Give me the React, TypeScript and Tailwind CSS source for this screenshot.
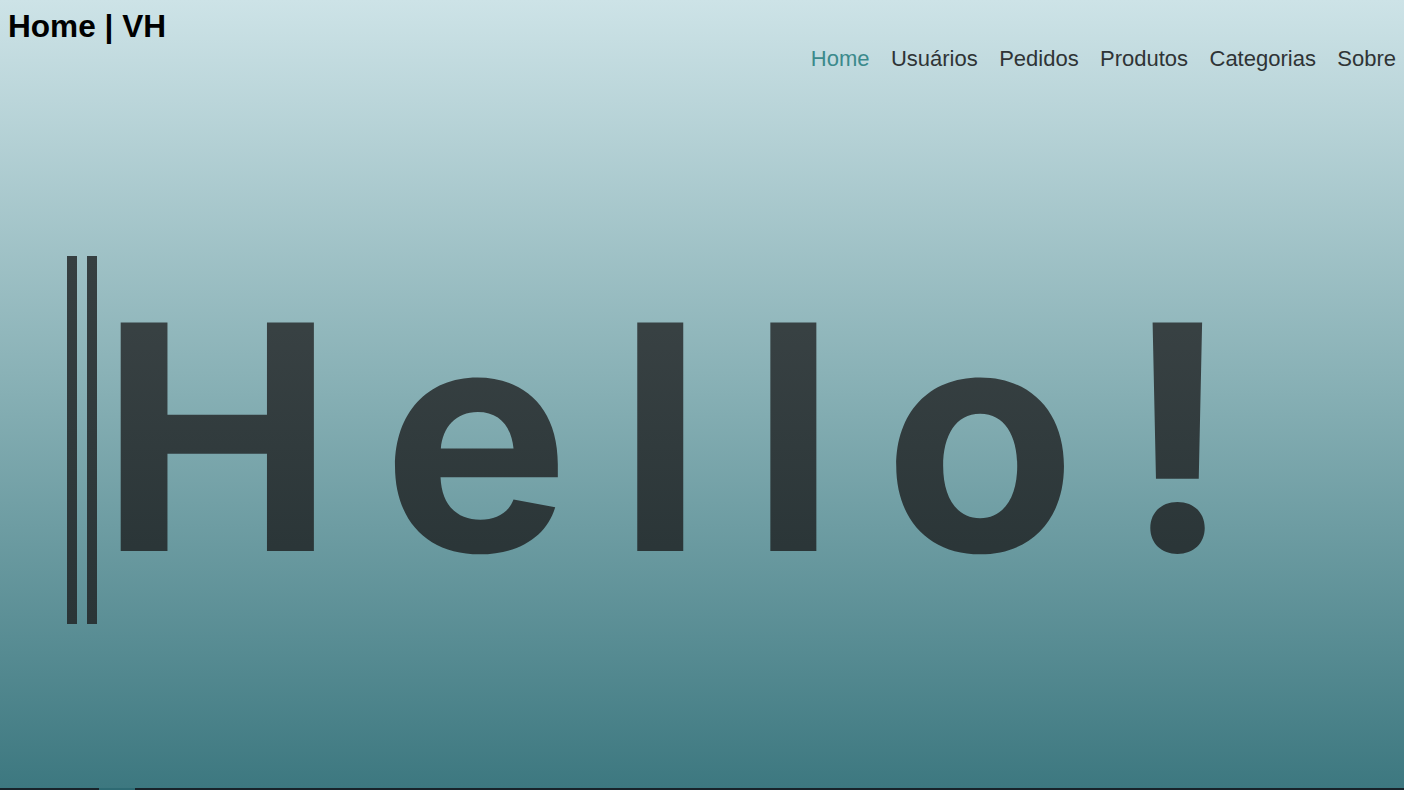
import React from "react";

export default function App() {
  const links = ["Home", "Usuários", "Pedidos", "Produtos", "Categorias", "Sobre"];
  return (
    <div className="w-full">
      <div className="h-[788px] w-full bg-[linear-gradient(to_bottom,#cde3e7_0%,#86afb4_50%,#3d7880_100%)] flex flex-col">
        <header className="flex justify-between items-start pl-2 pr-[8px]">
          <h1 className="mt-2 text-[31.6px] leading-[1.15] font-bold text-black font-['Liberation_Sans',Arial,sans-serif]">
            Home | VH
          </h1>
          <nav className="mt-[46px] flex gap-[21.4px] text-[22px] leading-[1.15] font-['Liberation_Sans',Arial,sans-serif]">
            {links.map((l, i) => (
              <a key={l} className={i === 0 ? "text-[#3b8a8c]" : "text-[#2f3436]"}>
                {l}
              </a>
            ))}
          </nav>
        </header>
        <div className="mt-[185px] pl-[67px] flex items-start">
          <div className="flex gap-[10px] h-[368px]">
            <div className="w-[10px] h-full bg-[linear-gradient(to_bottom,#363f41,#2a3537)]" />
            <div className="w-[10px] h-full bg-[linear-gradient(to_bottom,#363f41,#2a3537)]" />
          </div>
          <div className="ml-[3px] text-[314px] leading-[362px] font-bold tracking-[48px] font-['Inter',sans-serif] bg-[linear-gradient(to_bottom,#384143_20%,#2b3638_80%)] bg-clip-text text-transparent">
            Hello!
          </div>
        </div>
      </div>
      <div className="h-[2px] w-full bg-[#18232a] flex">
        <div className="ml-[99px] w-[36px] h-full bg-[#2e6a73]" />
      </div>
    </div>
  );
}
